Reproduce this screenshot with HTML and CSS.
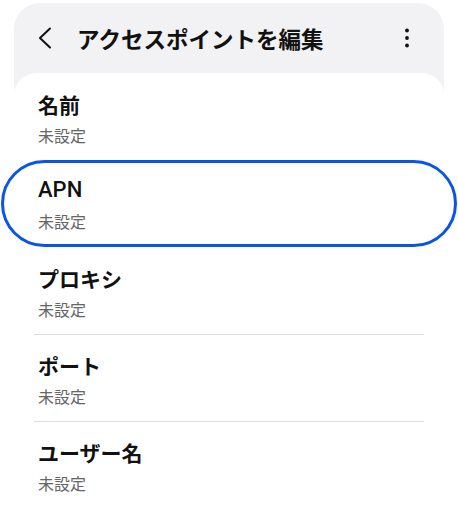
FILE: index.html
```html
<!DOCTYPE html>
<html lang="ja">
<head>
<meta charset="utf-8">
<title>アクセスポイントを編集</title>
<link rel="stylesheet" href="styles.css">
</head>
<body>
<div class="panel">
  <header class="appbar">
    <svg class="back" width="16" height="22" viewBox="0 0 16 22"><polyline points="13,1.5 3,11 13,20.5" fill="none" stroke="#111" stroke-width="2" stroke-linecap="round" stroke-linejoin="round"/></svg>
    <h1 class="title">アクセスポイントを編集</h1>
    <svg class="more" width="6" height="22" viewBox="0 0 6 22"><circle cx="3" cy="3.5" r="1.9" fill="#111"/><circle cx="3" cy="11" r="1.9" fill="#111"/><circle cx="3" cy="18.5" r="1.9" fill="#111"/></svg>
  </header>
  <main class="card">
    <div class="item">
      <div class="item-title">名前</div>
      <div class="item-sub">未設定</div>
    </div>
    <div class="item item-focus">
      <div class="item-title latin">APN</div>
      <div class="item-sub">未設定</div>
    </div>
    <div class="item">
      <div class="item-title">プロキシ</div>
      <div class="item-sub">未設定</div>
    </div>
    <div class="item sep">
      <div class="item-title">ポート</div>
      <div class="item-sub">未設定</div>
    </div>
    <div class="item sep">
      <div class="item-title">ユーザー名</div>
      <div class="item-sub">未設定</div>
    </div>
  </main>
</div>
</body>
</html>
```
FILE: styles.css
```css
html, body {
  margin: 0;
  padding: 0;
  background: #ffffff;
}
body {
  font-family: "Noto Sans CJK JP", "Noto Sans", sans-serif;
  color: #111111;
  width: 458px;
  height: 520px;
  overflow: hidden;
}
.panel {
  margin: 3px 14px 0 14px;
  background: #f2f2f4;
  border-radius: 26px 26px 0 0;
}
.appbar {
  height: 70px;
  display: flex;
  align-items: center;
  padding-left: 23px;
  padding-right: 34px;
}
.back {
  flex: none;
  display: block;
}
.title {
  margin: 0 0 0 24px;
  font-size: 22.5px;
  font-weight: 700;
  line-height: 30px;
  flex: 1;
  color: #111;
}
.more {
  flex: none;
  display: block;
}
.card {
  background: #ffffff;
  border-radius: 22px 22px 0 0;
  padding-bottom: 12px;
}
.item {
  margin: 0 20px;
  padding: 16px 4px 14px 4px;
  border-top: 1px solid transparent;
}
.item.sep {
  border-top-color: #dcdce1;
}
.item-title {
  font-size: 21px;
  font-weight: 700;
  line-height: 28px;
  color: #111;
}
.item-title.latin {
  font-family: Roboto, "Noto Sans", sans-serif;
  font-weight: 500;
  font-size: 22px;
}
.item-sub {
  margin-top: 6px;
  font-size: 16px;
  line-height: 22px;
  color: #666666;
}
.item-focus {
  margin: 0 -13px;
  border: 3px solid #0a55e6;
  border-radius: 44px;
  padding: 13px 34px 12px 34px;
}
```
